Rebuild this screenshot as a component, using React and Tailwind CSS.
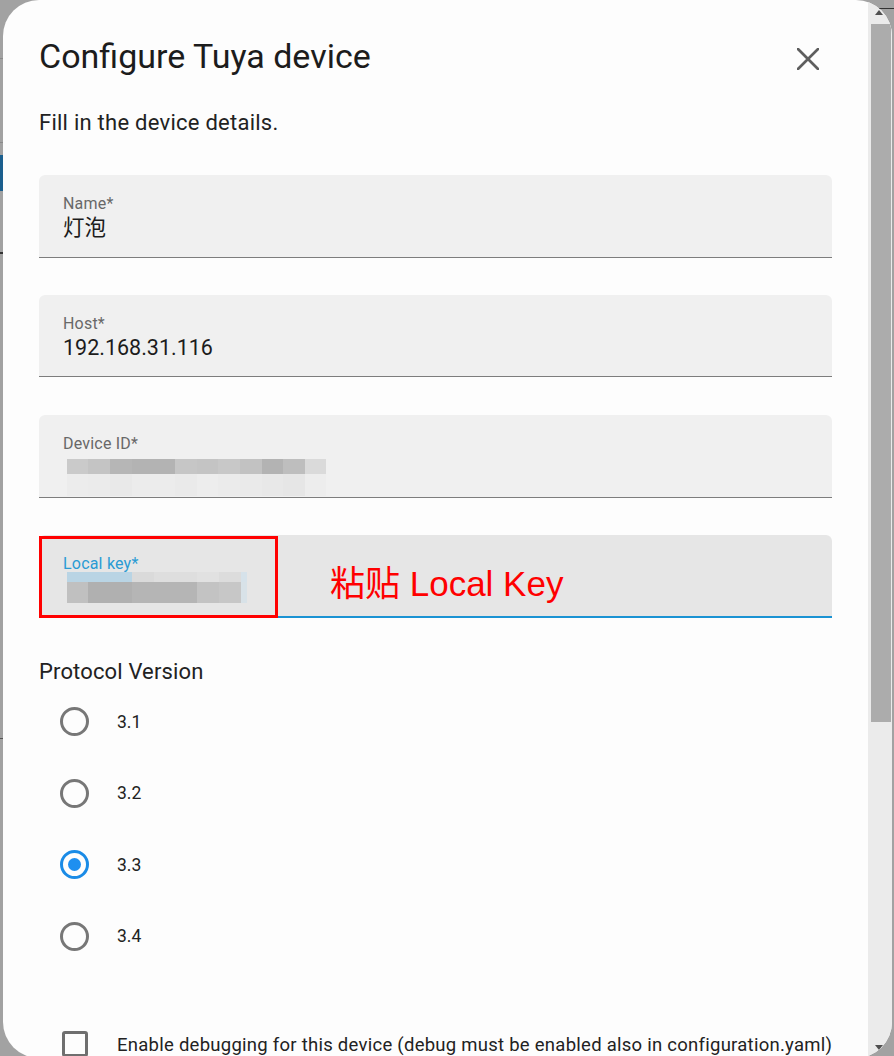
import React from "react";

const F = "font-['Roboto','Noto_Sans_CJK_SC',sans-serif]";

function Field({ label, children, className = "", labelClass = "text-[#686868]" }) {
  return (
    <div className={`relative h-[84px] rounded-t-[6px] pl-[24px] pt-[19px] ${className}`}>
      <div className={`h-[20px] text-[16px] leading-[20px] tracking-[0.2px] ${labelClass}`}>{label}</div>
      {children}
    </div>
  );
}

function Blocks({ rows }) {
  return (
    <div className="flex flex-col">
      {rows.map((r, i) => (
        <div key={i} className="flex" style={{ height: r.h }}>
          {r.cells.map((c, j) => (
            <div key={j} style={{ width: c[0], background: c[1] }} />
          ))}
        </div>
      ))}
    </div>
  );
}

function Radio({ label, checked }) {
  return (
    <div className="flex h-[73px] items-center">
      <div className="ml-[21px] flex h-[29px] w-[29px] items-center justify-center">
        {checked ? (
          <div className="flex h-[29px] w-[29px] items-center justify-center rounded-full border-[3px] border-[#1a8be6]">
            <div className="h-[13px] w-[13px] rounded-full bg-[#1e8ff0]" />
          </div>
        ) : (
          <div className="h-[29px] w-[29px] rounded-full border-[3px] border-[#777777]" />
        )}
      </div>
      <div className="ml-[28px] text-[17.5px] leading-[24px] text-[#222222]">{label}</div>
    </div>
  );
}

export default function App() {
  const devRows = [
    {
      h: 15,
      cells: [
        [21, "#cacaca"], [22, "#c4c4c4"], [22, "#b6b6b6"], [43, "#b3b3b3"], [22, "#c6c6c6"],
        [21, "#c4c4c4"], [22, "#c8c8c8"], [22, "#c2c2c2"], [21, "#b3b3b3"], [22, "#bebebe"], [21, "#dadada"],
      ],
    },
    {
      h: 22,
      cells: [
        [21, "#ececec"], [22, "#ebebeb"], [22, "#e9e9e9"], [43, "#ececec"], [22, "#eaeaea"],
        [21, "#ededed"], [22, "#ebebeb"], [22, "#eaeaea"], [21, "#e8e8e8"], [22, "#e6e6e6"], [21, "#ededed"],
      ],
    },
  ];
  const keyRows = [
    {
      h: 10,
      cells: [[65, "#b9d4e4"], [22, "#dadada"], [43, "#dedede"], [22, "#e1e1e1"], [22, "#dcdcdc"], [6, "#d6e2ea"]],
    },
    {
      h: 21,
      cells: [[21, "#c0c0c0"], [44, "#b0b0b0"], [65, "#b5b5b5"], [22, "#c3c3c3"], [22, "#c7c7c7"], [6, "#d8e2e8"]],
    },
  ];

  return (
    <div className={`relative h-[1056px] w-[894px] overflow-hidden bg-[#a2a2a2] ${F}`}>
      {/* page behind overlay */}
      <div className="absolute left-0 top-[155px] h-[36px] w-[3px] bg-[#1b5f8e]" />
      <div className="absolute left-0 top-[58px] h-px w-[3px] bg-[#8a8a8a]" />
      <div className="absolute left-0 top-[142px] h-px w-[3px] bg-[#8a8a8a]" />
      <div className="absolute left-0 top-[252px] h-[2px] w-[3px] bg-[#333]" />
      <div className="absolute left-0 top-[738px] h-px w-[3px] bg-[#555]" />
      <div className="absolute right-0 top-[8px] h-px w-[40px] bg-[#333]" />

      <div className="absolute left-[3px] top-0 flex h-[1058px] w-[889px] overflow-hidden rounded-[36px] bg-[#fdfdfd]">
        {/* content */}
        <div className="flex w-[865px] flex-col px-[36px]">
          <div className="mt-[36px] flex h-[40px] justify-between">
            <div className="text-[34px] leading-[40px] text-[#1c1c1c]">Configure Tuya device</div>
            <svg className="mr-[13px] mt-[12px]" width="22" height="22" viewBox="0 0 22 22">
              <path d="M1 1 L21 21 M21 1 L1 21" stroke="#5e5e5e" strokeWidth="2.7" strokeLinecap="square" />
            </svg>
          </div>

          <div className="mt-[33px] h-[28px] text-[22px] leading-[28px] tracking-[0.25px] text-[#222222]">
            Fill in the device details.
          </div>

          <Field label="Name*" className="mt-[38px] border-b border-[#7d7d7d] bg-[#f0f0f0]">
            <div className="h-[28px] text-[21.5px] leading-[28px] text-[#1c1c1c]">灯泡</div>
          </Field>

          <Field label="Host*" className="mt-[37px] border-b border-[#7d7d7d] bg-[#f0f0f0]">
            <div className="h-[28px] text-[21.5px] leading-[28px] text-[#1c1c1c]">192.168.31.116</div>
          </Field>

          <Field label="Device ID*" className="mt-[38px] border-b border-[#7d7d7d] bg-[#f0f0f0]">
            <div className="ml-[4px] mt-[5px]">
              <Blocks rows={devRows} />
            </div>
          </Field>

          <Field
            label="Local key*"
            labelClass="text-[#2a9bd4]"
            className="mt-[37px] border-b-2 border-[#1b93d3] bg-[#e6e6e6]"
          >
            <div className="ml-[4px] mt-[-2px]">
              <Blocks rows={keyRows} />
            </div>
            <div className="absolute left-0 top-[1px] h-[82px] w-[239px] border-[3px] border-[#ff0000]" />
            <div className="absolute left-[291px] top-[29px] whitespace-nowrap font-['Liberation_Sans','Noto_Sans_CJK_SC',sans-serif] text-[35px] leading-[40px] text-[#ff0000]">
              粘贴 Local Key
            </div>
          </Field>

          <div className="mt-[40px] h-[29px] text-[22px] leading-[28px] tracking-[0.15px] text-[#222222]">
            Protocol Version
          </div>

          <Radio label="3.1" />
          <Radio label="3.2" />
          <Radio label="3.3" checked />
          <Radio label="3.4" />

          <div className="mt-[59px] flex items-start">
            <div className="ml-[23px] h-[26px] w-[26px] shrink-0 rounded-[3px] border-[3px] border-[#6f6f6f]" />
            <div className="ml-[29px] mt-[1px] whitespace-nowrap text-[18.5px] leading-[26px] tracking-[0.26px] text-[#222222]">
              Enable debugging for this device (debug must be enabled also in configuration.yaml)
            </div>
          </div>
        </div>

        {/* scrollbar */}
        <div className="relative flex w-[24px] flex-col bg-[#ebebeb]">
          <svg className="absolute left-[7px] top-[10px]" width="8" height="5" viewBox="0 0 8 5">
            <path d="M0 5 L4 0 L8 5 Z" fill="#505050" />
          </svg>
          <div className="ml-[3px] mt-[24px] h-[698px] w-[20px] bg-[#acacac]" />
          <svg className="absolute left-[7px] top-[1045px]" width="8" height="5" viewBox="0 0 8 5">
            <path d="M0 0 L8 0 L4 5 Z" fill="#505050" />
          </svg>
        </div>
      </div>
    </div>
  );
}
